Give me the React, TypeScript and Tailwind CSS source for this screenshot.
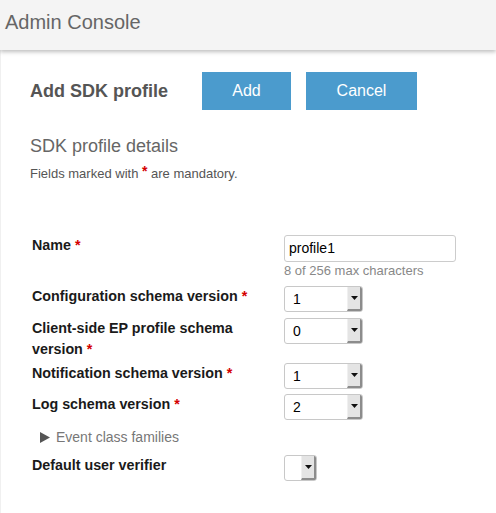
const font = { fontFamily: '"Liberation Sans", Arial, sans-serif' }

interface SelectProps {
  value: string;
  width: string;
}

const Star = () => <span className="text-[#d40000] ml-[4px]">*</span>

const Select = ({ value, width }: SelectProps) => (
  <div className={`flex h-[26px] ${width} rounded-[3px] border border-[#c8c8c8] bg-white overflow-hidden`}>
    <div className="flex-1 pl-[8px] text-[14px] leading-[24px] text-black">{value}</div>
    <div className="w-[15px] flex items-center justify-center bg-[#e4e4e4] border-l border-l-[#f0f0f0] border-r-2 border-r-[#8c8c8c] border-b-2 border-b-[#8c8c8c]">
      <svg width="7" height="4" viewBox="0 0 7 4">
        <polygon points="0,0 7,0 3.5,4" fill="#111" />
      </svg>
    </div>
  </div>
)

interface RowProps {
  label: React.ReactNode;
  children: React.ReactNode;
  className?: string;
}

const Row = ({ label, children, className }: RowProps) => (
  <div className={`flex ${className ?? ""}`}>
    <div className="w-[283px] shrink-0 pl-[31px] pr-[16px] text-[14.3px] leading-[21px] font-bold text-[#1a1a1a]">{label}</div>
    <div>{children}</div>
  </div>
)

export default function App() {
  return (
    <div className="w-[496px] h-[513px] bg-white overflow-hidden" style={font}>
      <header className="h-[50px] bg-[#f4f4f4] shadow-[0_2px_4px_rgba(0,0,0,0.25)] relative z-10 flex items-start">
        <span className="ml-[5px] mt-[8px] text-[20px] leading-[28px] text-[#666]">Admin Console</span>
      </header>

      <main className="border-l border-[#f0f0f0] h-[463px]">
        <div className="flex items-center pt-[22px]">
          <h1 className="w-[201px] pl-[29px] text-[18px] font-bold text-[#555]">Add SDK profile</h1>
          <button className="w-[89px] h-[38px] bg-[#4b9bcd] text-white text-[16px]">Add</button>
          <button className="ml-[15px] w-[111px] h-[38px] bg-[#4b9bcd] text-white text-[16px]">Cancel</button>
        </div>

        <h2 className="mt-[24px] pl-[29px] text-[18px] leading-[24px] text-[#666]">SDK profile details</h2>
        <p className="mt-[8px] pl-[29px] h-[16px] text-[13px] leading-[16px] text-[#555]">
          Fields marked with <span className="relative top-[-2px] text-[#d40000] text-[14px] leading-none font-bold">*</span> are mandatory.
        </p>

        <Row className="mt-[53px]" label={<>Name<Star /></>}>
          <div className="w-[172px] h-[27px] rounded-[3px] border border-[#ccc] px-[4px] text-[14px] leading-[25px] text-black">profile1</div>
          <div className="text-[13px] leading-[18px] text-[#888]">8 of 256 max characters</div>
        </Row>
        <Row className="mt-[6px]" label={<>Configuration schema version<Star /></>}>
          <Select value="1" width="w-[79px]" />
        </Row>
        <Row className="mt-[6px]" label={<>Client-side EP profile schema version<Star /></>}>
          <Select value="0" width="w-[79px]" />
        </Row>
        <Row className="mt-[3px]" label={<>Notification schema version<Star /></>}>
          <Select value="1" width="w-[79px]" />
        </Row>
        <Row className="mt-[5px]" label={<>Log schema version<Star /></>}>
          <Select value="2" width="w-[79px]" />
        </Row>

        <div className="mt-[7px] pl-[39px] flex items-center h-[20px]">
          <svg width="10" height="11" viewBox="0 0 10 11">
            <polygon points="0,0 10,5.5 0,11" fill="#555" />
          </svg>
          <span className="ml-[6px] text-[14px] text-[#777]">Event class families</span>
        </div>

        <Row className="mt-[8px]" label="Default user verifier">
          <Select value="" width="w-[33px]" />
        </Row>
      </main>
    </div>
  )
}
